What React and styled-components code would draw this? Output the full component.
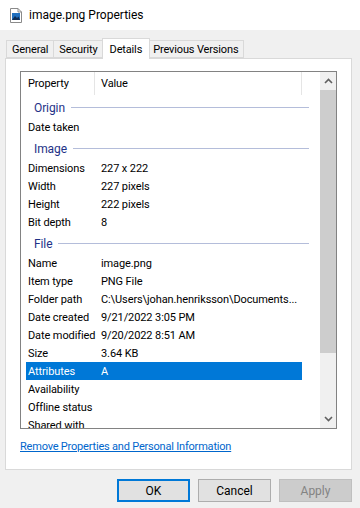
import styled, { createGlobalStyle } from "styled-components";

const GlobalStyle = createGlobalStyle`
  html, body {
    margin: 0;
    padding: 0;
    background: #f0f0f0;
  }
  body {
    font-family: Roboto, "Liberation Sans", sans-serif;
    font-size: 11px;
    letter-spacing: -0.1px;
    color: #000;
  }
`;

const Window = styled.div`
  width: 360px;
  height: 508px;
  display: flex;
  flex-direction: column;
  background: #f0f0f0;
  overflow: hidden;
`;

const TitleBar = styled.div`
  height: 30px;
  background: #fff;
  display: flex;
  align-items: center;
  gap: 7px;
  padding-left: 10px;
  font-size: 12px;
  letter-spacing: 0;
`;

const TabStrip = styled.div`
  display: flex;
  align-items: flex-end;
  margin-top: 7px;
  padding-left: 6px;
  height: 21px;
  position: relative;
  z-index: 1;
`;

const Tab = styled.div`
  height: ${(p) => (p.$active ? "21px" : "18px")};
  padding: 0 ${(p) => (p.$active ? "7px" : "5px")};
  margin: 0 ${(p) => (p.$active ? "-2px" : "0")};
  margin-bottom: ${(p) => (p.$active ? "-1px" : "0")};
  display: flex;
  align-items: center;
  font-size: 11px;
  letter-spacing: -0.15px;
  background: ${(p) => (p.$active ? "#fff" : "#f0f0f0")};
  border: 1px solid #d9d9d9;
  border-bottom: ${(p) => (p.$active ? "none" : "1px solid #d9d9d9")};
  border-left: ${(p) => (p.$first || p.$active ? "1px solid #d9d9d9" : "none")};
  box-sizing: border-box;
  position: relative;
  z-index: ${(p) => (p.$active ? 2 : 1)};
`;

const Panel = styled.div`
  margin: 0 8px 0 5px;
  height: 412px;
  box-sizing: border-box;
  background: #fff;
  border: 1px solid #d9d9d9;
  padding: 12px 14px 0 14px;
  display: flex;
  flex-direction: column;
`;

const ListBox = styled.div`
  width: 317px;
  height: 358px;
  box-sizing: border-box;
  border: 1px solid #828282;
  display: flex;
`;

const ListContent = styled.div`
  flex: 1;
  overflow: hidden;
  display: flex;
  flex-direction: column;
`;

const HeaderRow = styled.div`
  height: 23px;
  flex-shrink: 0;
  display: grid;
  grid-template-columns: 74px 207px 1fr;
  align-items: stretch;
`;

const HeaderCell = styled.div`
  display: flex;
  align-items: center;
  padding-left: ${(p) => p.$pad || "6px"};
  border-right: ${(p) => (p.$sep ? "1px solid #e5e5e5" : "none")};
`;

const GroupRow = styled.div`
  height: 23px;
  flex-shrink: 0;
  display: flex;
  align-items: center;
  padding: 2px 11px 0 13px;
  box-sizing: border-box;
  gap: 6px;
  color: #1e3287;
  font-size: 12px;
`;

const GroupLine = styled.div`
  flex: 1;
  height: 1px;
  background: #b4bdda;
`;

const Row = styled.div`
  height: 18px;
  flex-shrink: 0;
  display: grid;
  grid-template-columns: 73px 1fr;
  align-items: center;
  margin: 0 18px 0 5px;
  padding-left: 2px;
  background: ${(p) => (p.$selected ? "#0078d7" : "transparent")};
  color: ${(p) => (p.$selected ? "#fff" : "#000")};
  white-space: nowrap;
`;

const Value = styled.span`
  overflow: hidden;
`;

const ScrollBar = styled.div`
  width: 16px;
  background: #f0f0f0;
  display: flex;
  flex-direction: column;
`;

const ScrollArrow = styled.div`
  height: 18px;
  display: flex;
  align-items: center;
  justify-content: center;
`;

const Thumb = styled.div`
  height: 263px;
  background: #cdcdcd;
`;

const Spacer = styled.div`
  flex: 1;
`;

const Link = styled.a`
  margin-top: 11px;
  color: #0066cc;
  font-size: 11px;
  letter-spacing: -0.2px;
  text-decoration: underline;
  cursor: pointer;
`;

const ButtonBar = styled.div`
  display: flex;
  justify-content: flex-end;
  gap: 8px;
  padding: 9px 8px 0 0;
`;

const Button = styled.button`
  width: 73px;
  height: 23px;
  box-sizing: border-box;
  font-family: inherit;
  font-size: 12px;
  background: ${(p) => (p.$disabled ? "#cccccc" : "#e1e1e1")};
  color: ${(p) => (p.$disabled ? "#838383" : "#000")};
  border: ${(p) =>
    p.$default ? "2px solid #0078d7" : p.$disabled ? "1px solid #bfbfbf" : "1px solid #adadad"};
  padding: 0;
`;

const FileIcon = () => (
  <svg width="12" height="15" viewBox="0 0 12 15">
    <path d="M0.5 0.5 H8 L11.5 4 V14.5 H0.5 Z" fill="#fff" stroke="#8a8a8a" />
    <path d="M8 0.5 V4 H11.5" fill="none" stroke="#8a8a8a" />
    <rect x="2" y="5" width="8" height="7" fill="#1f6fbf" />
    <path d="M2 12 L5 8 L7 10 L8.5 8.5 L10 12 Z" fill="#0e2d55" />
  </svg>
);

const Chevron = ({ up }) => (
  <svg width="9" height="6" viewBox="0 0 9 6">
    <path
      d={up ? "M1 5 L4.5 1.5 L8 5" : "M1 1 L4.5 4.5 L8 1"}
      fill="none"
      stroke="#606060"
      strokeWidth="1.6"
    />
  </svg>
);

const sections = [
  { title: "Origin", rows: [["Date taken", ""]] },
  {
    title: "Image",
    rows: [
      ["Dimensions", "227 x 222"],
      ["Width", "227 pixels"],
      ["Height", "222 pixels"],
      ["Bit depth", "8"],
    ],
  },
  {
    title: "File",
    rows: [
      ["Name", "image.png"],
      ["Item type", "PNG File"],
      ["Folder path", "C:\\Users\\johan.henriksson\\Documents..."],
      ["Date created", "9/21/2022 3:05 PM"],
      ["Date modified", "9/20/2022 8:51 AM"],
      ["Size", "3.64 KB"],
      ["Attributes", "A"],
      ["Availability", ""],
      ["Offline status", ""],
      ["Shared with", ""],
    ],
  },
];

const tabs = ["General", "Security", "Details", "Previous Versions"];

export default function App() {
  return (
    <>
      <GlobalStyle />
      <Window>
        <TitleBar>
          <FileIcon />
          <span>image.png Properties</span>
        </TitleBar>
        <TabStrip>
          {tabs.map((t, i) => (
            <Tab key={t} $first={i === 0} $active={t === "Details"}>
              {t}
            </Tab>
          ))}
        </TabStrip>
        <Panel>
          <ListBox>
            <ListContent>
              <HeaderRow>
                <HeaderCell $pad="7px" $sep>
                  Property
                </HeaderCell>
                <HeaderCell $sep>Value</HeaderCell>
                <HeaderCell />
              </HeaderRow>
              {sections.map((s) => (
                <div key={s.title}>
                  <GroupRow>
                    {s.title}
                    <GroupLine />
                  </GroupRow>
                  {s.rows.map(([k, v]) => (
                    <Row key={k} $selected={k === "Attributes"}>
                      <span>{k}</span>
                      <Value>{v}</Value>
                    </Row>
                  ))}
                </div>
              ))}
            </ListContent>
            <ScrollBar>
              <ScrollArrow>
                <Chevron up />
              </ScrollArrow>
              <Thumb />
              <Spacer />
              <ScrollArrow>
                <Chevron />
              </ScrollArrow>
            </ScrollBar>
          </ListBox>
          <Link>Remove Properties and Personal Information</Link>
        </Panel>
        <ButtonBar>
          <Button $default>OK</Button>
          <Button>Cancel</Button>
          <Button $disabled>Apply</Button>
        </ButtonBar>
      </Window>
    </>
  );
}
